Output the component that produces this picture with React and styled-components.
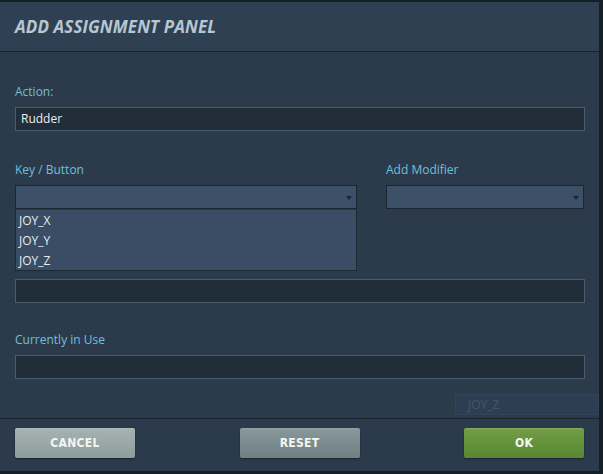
import React from "react";
import styled, { createGlobalStyle } from "styled-components";

const GlobalStyle = createGlobalStyle`
  html, body {
    margin: 0;
    padding: 0;
    background: #161e26;
  }
  * {
    box-sizing: border-box;
  }
`;

const Frame = styled.div`
  width: 603px;
  height: 474px;
  background: #161e26;
  overflow: hidden;
  padding-top: 2px;
`;

const Panel = styled.div`
  width: 599px;
  height: 469px;
  background: #2c3b4c;
  display: flex;
  flex-direction: column;
  font-family: "Open Sans", "DejaVu Sans", sans-serif;
`;

const Header = styled.div`
  height: 50px;
  flex: none;
  background: #304053;
  border-bottom: 1px solid #1a2430;
  display: flex;
  align-items: center;
  padding-left: 15px;
  h1 {
    margin: 0;
    font-size: 17px;
    font-weight: 700;
    font-style: italic;
    color: #b6c7d3;
    letter-spacing: 0.1px;
  }
`;

const Body = styled.div`
  flex: 1;
  padding: 0 14px 0 15px;
  display: flex;
  flex-direction: column;
`;

const Label = styled.div`
  font-size: 12px;
  line-height: 16px;
  height: 16px;
  color: #70bfd8;
  margin-top: ${(p) => p.top || 0}px;
  margin-bottom: 7px;
`;

const TextBox = styled.div`
  height: 24px;
  background: #222d3a;
  border: 1px solid #4a5d70;
  color: #e9eef2;
  font-size: 12px;
  line-height: 22px;
  padding-left: 5px;
  margin-top: ${(p) => p.top || 0}px;
`;

const SelectRow = styled.div`
  display: grid;
  grid-template-columns: 342px 198px;
  column-gap: 29px;
  margin-top: 31px;
`;

const Field = styled.div`
  position: relative;
  display: flex;
  flex-direction: column;
`;

const Select = styled.div`
  height: 24px;
  background: #3c5068;
  border: 1px solid #1c2631;
  position: relative;
  &::after {
    content: "";
    position: absolute;
    right: 4px;
    top: 10px;
    border-left: 3.5px solid transparent;
    border-right: 3.5px solid transparent;
    border-top: 4px solid #1c2631;
  }
`;

const DropList = styled.div`
  position: absolute;
  top: 48px;
  left: 0;
  width: 342px;
  height: 61px;
  background: #3a4d64;
  border: 1px solid #1f2935;
  border-top: none;
  padding-top: 1px;
  z-index: 2;
`;

const DropItem = styled.div`
  height: 20px;
  line-height: 20px;
  padding-left: 3px;
  font-size: 12px;
  color: #e6ecf0;
`;

const GhostRow = styled.div`
  display: flex;
  justify-content: flex-end;
  margin: 15px -14px 0 0;
`;

const GhostBox = styled.div`
  width: 144px;
  height: 21px;
  border: 1px solid #33445a;
  background: #2e3e52;
  font-size: 12px;
  line-height: 19px;
  padding-left: 12px;
  color: #44566b;
`;

const Footer = styled.div`
  height: 53px;
  flex: none;
  border-top: 1px solid #1a2430;
  display: flex;
  justify-content: space-between;
  align-items: flex-start;
  padding: 9px 15px 0 15px;
`;

const BUTTON_COLORS = {
  cancel: ["#b0bebd", "#a3b1b0", "#8e9c9c"],
  reset: ["#95a6a8", "#869799", "#6f7f83"],
  ok: ["#86b05a", "#6f9c45", "#5a8832"],
};

const Button = styled.div`
  width: 120px;
  height: 30px;
  border-radius: 2px;
  background: linear-gradient(
    to bottom,
    ${(p) => BUTTON_COLORS[p.kind][0]} 0px,
    ${(p) => BUTTON_COLORS[p.kind][1]} 2px,
    ${(p) => BUTTON_COLORS[p.kind][2]} 100%
  );
  box-shadow: 0 1px 2px rgba(0, 0, 0, 0.45);
  display: flex;
  align-items: center;
  justify-content: center;
  font-family: "Liberation Sans Narrow", "DejaVu Sans Condensed", sans-serif;
  font-weight: 700;
  font-size: 12px;
  color: #f3f6f1;
  letter-spacing: 0.3px;
`;

export default function App() {
  return (
    <>
      <GlobalStyle />
      <Frame>
        <Panel>
          <Header>
            <h1>ADD ASSIGNMENT PANEL</h1>
          </Header>
          <Body>
            <Label top={32}>Action:</Label>
            <TextBox>Rudder</TextBox>
            <SelectRow>
              <Field>
                <Label>Key / Button</Label>
                <Select />
                <DropList>
                  <DropItem>JOY_X</DropItem>
                  <DropItem>JOY_Y</DropItem>
                  <DropItem>JOY_Z</DropItem>
                </DropList>
              </Field>
              <Field>
                <Label>Add Modifier</Label>
                <Select />
              </Field>
            </SelectRow>
            <TextBox top={70} />
            <Label top={29}>Currently in Use</Label>
            <TextBox />
            <GhostRow>
              <GhostBox>JOY_Z</GhostBox>
            </GhostRow>
          </Body>
          <Footer>
            <Button kind="cancel">CANCEL</Button>
            <Button kind="reset">RESET</Button>
            <Button kind="ok">OK</Button>
          </Footer>
        </Panel>
      </Frame>
    </>
  );
}
